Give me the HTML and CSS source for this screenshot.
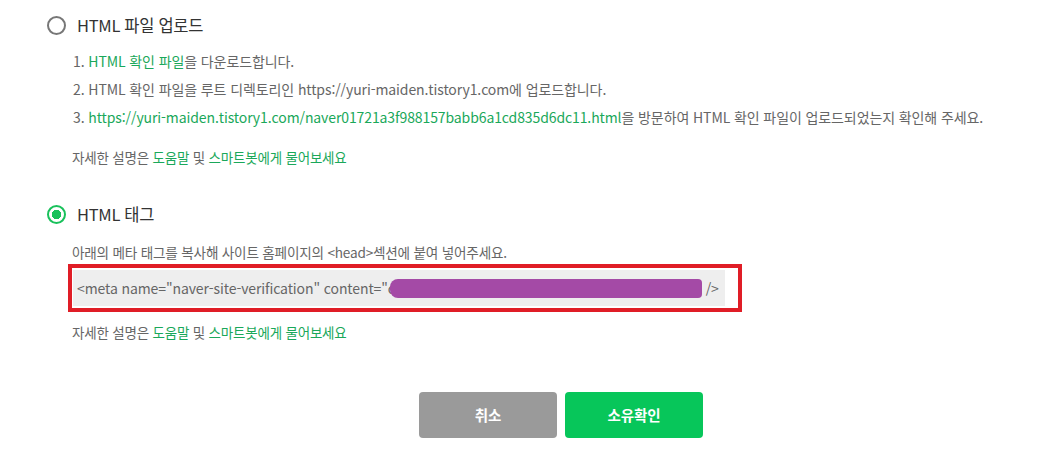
FILE: index.html
```html
<!DOCTYPE html>
<html lang="ko">
<head>
    <meta charset="UTF-8">
    <title>사이트 소유확인</title>
    <link rel="stylesheet" href="styles.css">
</head>
<body>
    <div class="box">

        <div class="option">
            <div class="head">
                <span class="radio"></span>
                <span class="title">HTML 파일 업로드</span>
            </div>
            <ol class="steps">
                <li>1. <a class="link">HTML 확인 파일</a>을 다운로드합니다.</li>
                <li>2. HTML 확인 파일을 루트 디렉토리인 https://yuri-maiden.tistory1.com에 업로드합니다.</li>
                <li>3. <a class="link">https://yuri-maiden.tistory1.com/naver01721a3f988157babb6a1cd835d6dc11.html</a>을 방문하여 HTML 확인 파일이 업로드되었는지 확인해 주세요.</li>
            </ol>
            <p class="help">자세한 설명은 <a class="link">도움말</a> 및 <a class="link">스마트봇에게 물어보세요</a></p>
        </div>

        <div class="option">
            <div class="head">
                <span class="radio on"></span>
                <span class="title">HTML 태그</span>
            </div>
            <p class="desc">아래의 메타 태그를 복사해 사이트 홈페이지의 &lt;head&gt;섹션에 붙여 넣어주세요.</p>
            <div class="mark">
                <div class="code">&lt;meta name="naver-site-verification" content="c<span class="blot"></span> /&gt;</div>
            </div>
            <p class="help tag">자세한 설명은 <a class="link">도움말</a> 및 <a class="link">스마트봇에게 물어보세요</a></p>
        </div>

        <div class="btns">
            <div class="btn gray">취소</div>
            <div class="btn green">소유확인</div>
        </div>

    </div>
</body>
</html>
```

FILE: styles.css
```css
* {
    margin: 0;
    padding: 0;
    box-sizing: border-box;
}

body {
    background: #fff;
    font-family: "Noto Sans CJK KR", "Noto Sans", sans-serif;
    color: #666;
    font-size: 14px;
    letter-spacing: -0.1px;
}

.box {
    padding: 15px 0 0 47px;
}

.head {
    display: flex;
    align-items: center;
    height: 20px;
}

.radio {
    width: 19px;
    height: 19px;
    border: 2px solid #777;
    border-radius: 50%;
    margin-right: 11px;
}

.radio.on {
    border-color: #19c15b;
    background: radial-gradient(circle, #19c15b 0 4.5px, #fff 5px);
}

.title {
    font-size: 16.5px;
    color: #333;
    letter-spacing: -0.3px;
}

.steps {
    list-style: none;
    margin: 12px 0 0 26px;
    line-height: 28px;
}

.link {
    color: #1aa85a;
}

.help {
    margin: 12px 0 0 25px;
    line-height: 28px;
    font-size: 13.5px;
    letter-spacing: -0.2px;
}

.help.tag {
    margin-top: 6px;
}

.option + .option {
    margin-top: 33px;
}

.desc {
    margin: 16px 0 0 25px;
    line-height: 24px;
    font-size: 13.6px;
    letter-spacing: -0.2px;
}

.mark {
    margin: 0 0 0 21px;
    width: 674px;
    height: 48px;
    border: 4px solid #e01d26;
    padding: 2px 13px 2px 1px;
}

.code {
    height: 36px;
    background: #eee;
    line-height: 36px;
    padding-left: 4px;
    white-space: nowrap;
}

.blot {
    display: inline-block;
    width: 312px;
    height: 19px;
    margin-left: -5px;
    vertical-align: -4px;
    background: #a44aa6;
    border-radius: 8px 4px 4px 8px;
}

.btns {
    display: flex;
    gap: 8px;
    margin: 46px 0 0 372px;
}

.btn {
    width: 138px;
    height: 46px;
    line-height: 46px;
    text-align: center;
    color: #fff;
    font-weight: bold;
    font-size: 14.5px;
    border-radius: 4px;
}

.gray {
    background: #9a9a9a;
}

.green {
    background: #07c65a;
}
```
